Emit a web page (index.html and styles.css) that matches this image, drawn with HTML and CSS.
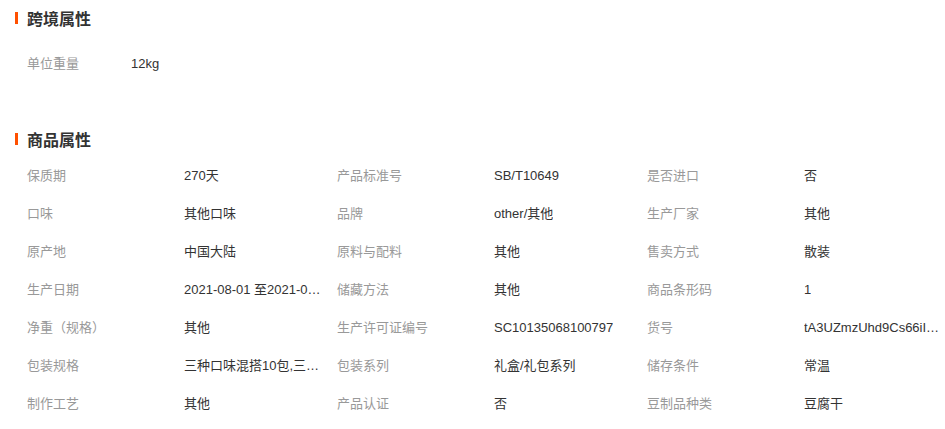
FILE: index.html
```html
<!DOCTYPE html>
<html lang="zh-CN">
<head>
<title>商品属性</title>
<meta charset="utf-8">
<meta name="viewport" content="width=device-width, initial-scale=1">
<link rel="stylesheet" href="styles.css">
</head>
<body>

<!-- 跨境属性 -->
<div class="attr-section cross">
  <h3 class="attr-title">跨境属性</h3>
  <div class="attr-list">
    <div class="attr-item">
      <span class="attr-label">单位重量</span>
      <span class="attr-value">12kg</span>
    </div>
  </div>
</div>

<!-- 商品属性 -->
<div class="attr-section">
  <h3 class="attr-title">商品属性</h3>
  <div class="attr-list">
    <div class="attr-item"><span class="attr-label">保质期</span><span class="attr-value">270天</span></div>
    <div class="attr-item"><span class="attr-label">产品标准号</span><span class="attr-value">SB/T10649</span></div>
    <div class="attr-item"><span class="attr-label">是否进口</span><span class="attr-value">否</span></div>

    <div class="attr-item"><span class="attr-label">口味</span><span class="attr-value">其他口味</span></div>
    <div class="attr-item"><span class="attr-label">品牌</span><span class="attr-value">other/其他</span></div>
    <div class="attr-item"><span class="attr-label">生产厂家</span><span class="attr-value">其他</span></div>

    <div class="attr-item"><span class="attr-label">原产地</span><span class="attr-value">中国大陆</span></div>
    <div class="attr-item"><span class="attr-label">原料与配料</span><span class="attr-value">其他</span></div>
    <div class="attr-item"><span class="attr-label">售卖方式</span><span class="attr-value">散装</span></div>

    <div class="attr-item"><span class="attr-label">生产日期</span><span class="attr-value">2021-08-01 至2021-08-31</span></div>
    <div class="attr-item"><span class="attr-label">储藏方法</span><span class="attr-value">其他</span></div>
    <div class="attr-item"><span class="attr-label">商品条形码</span><span class="attr-value">1</span></div>

    <div class="attr-item"><span class="attr-label">净重（规格）</span><span class="attr-value">其他</span></div>
    <div class="attr-item"><span class="attr-label">生产许可证编号</span><span class="attr-value">SC10135068100797</span></div>
    <div class="attr-item"><span class="attr-label">货号</span><span class="attr-value">tA3UZmzUhd9Cs66iICxYdRbT</span></div>

    <div class="attr-item"><span class="attr-label">包装规格</span><span class="attr-value">三种口味混搭10包,三种口味各一包</span></div>
    <div class="attr-item"><span class="attr-label">包装系列</span><span class="attr-value">礼盒/礼包系列</span></div>
    <div class="attr-item"><span class="attr-label">储存条件</span><span class="attr-value">常温</span></div>

    <div class="attr-item"><span class="attr-label">制作工艺</span><span class="attr-value">其他</span></div>
    <div class="attr-item"><span class="attr-label">产品认证</span><span class="attr-value">否</span></div>
    <div class="attr-item"><span class="attr-label">豆制品种类</span><span class="attr-value">豆腐干</span></div>
  </div>
</div>

</body>
</html>
```

FILE: styles.css
```css
* {
  box-sizing: border-box;
}

body {
  margin: 0;
  background: #fff;
  font-family: "Liberation Sans", "Noto Sans CJK SC", sans-serif;
  font-size: 13px;
  color: #333;
  overflow-x: hidden;
}

/* section header with the orange bar */
.attr-title {
  display: flex;
  align-items: center;
  gap: 9px;
  margin: 0;
  padding-left: 15px;
  height: 36px;
  font-size: 16px;
  font-weight: bold;
  color: #333;
}

.attr-title:before {
  content: "";
  width: 3px;
  height: 12px;
  background-color: #ff5000;
}

.attr-section + .attr-section {
  margin-top: 38px;
}

/* three columns of label / value pairs */
.attr-list {
  display: grid;
  grid-template-columns: 310px 310px 1fr;
  padding-left: 27px;
}

.cross .attr-list {
  padding-top: 9px;
}

.attr-item {
  display: flex;
  align-items: center;
  height: 38px;
  line-height: 38px;
}

.attr-label {
  flex: none;
  width: 157px;
  color: #999;
}

.cross .attr-label {
  width: 104px;
}

.attr-value {
  max-width: 137px;
  white-space: nowrap;
  overflow: hidden;
  text-overflow: ellipsis;
  color: #333;
}
```
